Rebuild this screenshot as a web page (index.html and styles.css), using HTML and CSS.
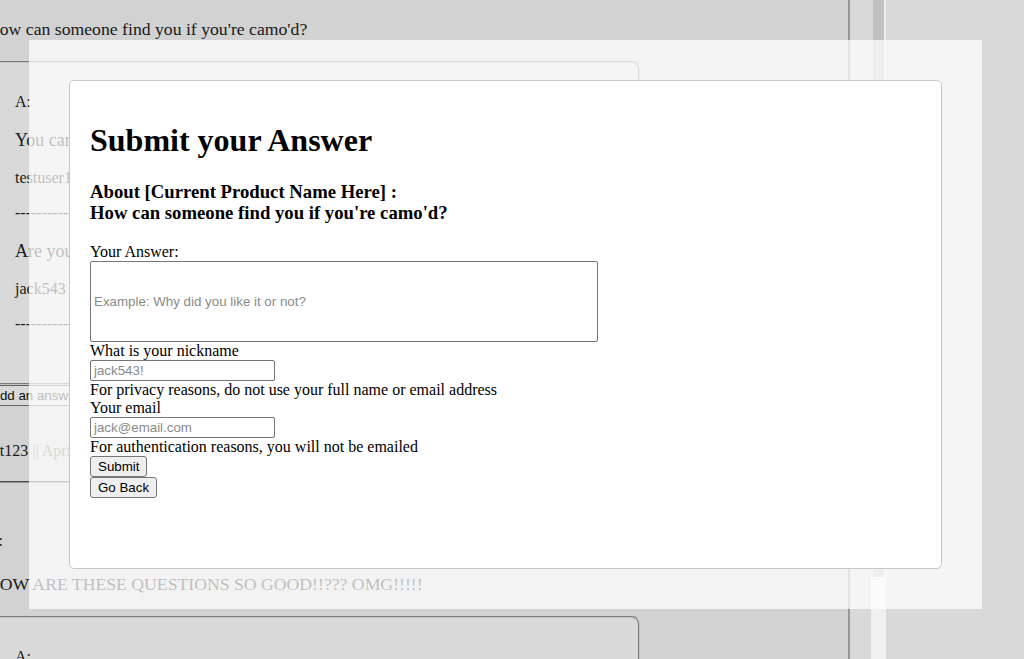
FILE: index.html
```html
<!DOCTYPE html>
<html lang="en">
<head>
<meta charset="utf-8">
<title>Questions</title>
<link rel="stylesheet" href="styles.css">
</head>
<body>
<div class="page">
  <main class="main">
    <section class="question">
      <p class="q-label">Q:</p>
      <p class="q-text">How can someone find you if you're camo'd?</p>
      <div class="answers">
        <p class="a-label">A:</p>
        <p class="a-text">You can't, that's the whole point of camo!</p>
        <p class="a-meta">testuser1 <span class="muted">|| April 3, 2020</span></p>
        <p class="sep">------------------------------------------</p>
        <p class="a-text">Are you serious? Just look a little closer.</p>
        <p class="a-meta">jack543 <span class="muted">|| April 4, 2020</span></p>
        <p class="sep">------------------------------------------</p>
      </div>
      <button class="add-btn" type="button">Add an answer</button>
      <p class="meta">test123 <span class="muted">|| April 2, 2020</span></p>
      <hr class="divider">
    </section>
    <section class="question">
      <p class="q-label">Q:</p>
      <p class="q-text">HOW ARE THESE QUESTIONS SO GOOD!!??? OMG!!!!!</p>
      <div class="answers">
        <p class="a-label">A:</p>
        <p class="a-text">Because the community is great!</p>
      </div>
    </section>
  </main>
  <div class="scrollbar">
    <div class="thumb"></div>
    <div class="track"></div>
  </div>
</div>

<div class="backdrop"></div>

<div class="modal">
  <div class="dialog">
    <h1 class="title">Submit your Answer</h1>
    <h3 class="subtitle">About [Current Product Name Here] :<br>How can someone find you if you're camo'd?</h3>
    <form class="form">
      <label class="label" for="answer">Your Answer:</label>
      <input class="field field-big" id="answer" type="text" placeholder="Example: Why did you like it or not?">
      <label class="label" for="nick">What is your nickname</label>
      <input class="field" id="nick" type="text" placeholder="jack543!">
      <span class="hint">For privacy reasons, do not use your full name or email address</span>
      <label class="label" for="email">Your email</label>
      <input class="field" id="email" type="text" placeholder="jack@email.com">
      <span class="hint">For authentication reasons, you will not be emailed</span>
      <button class="btn" type="submit">Submit</button>
      <button class="btn" type="button">Go Back</button>
    </form>
  </div>
</div>
</body>
</html>
```

FILE: styles.css
```css
html, body {
  margin: 0;
  padding: 0;
}

body {
  background: #ffffff;
  height: 100vh;
  overflow: hidden;
  font-family: "Liberation Serif", "Times New Roman", serif;
  color: #222222;
}

.page {
  display: flex;
  align-items: flex-start;
  gap: 21px;
  height: 100vh;
}

/* ---------- background page ---------- */
.main {
  flex: 0 0 auto;
  width: 861px;
  min-height: calc(100vh + 72px);
  margin-left: -13px;
  margin-top: -72px;
  background: #f7f7f7;
  border-right: 2px solid #b2b2b2;
}

.question {
  padding-top: 49px;
}

.q-label {
  margin: 0;
  font-size: 16px;
  line-height: 18px;
}

.q-text {
  margin: 24px 0 0;
  font-size: 17.7px;
  line-height: 21px;
}

.answers {
  width: 597px;
  margin-top: 21px;
  padding: 14px 26px 33px;
  background: #ffffff;
  border: 2px groove #e6e6e6;
  border-radius: 8px;
}

.a-label {
  margin: 16px 0;
  font-size: 16px;
  line-height: 18px;
}

.a-meta,
.sep {
  margin: 17px 0;
  font-size: 16px;
  line-height: 18px;
}

.a-text {
  margin: 18px 0;
  font-size: 18px;
  line-height: 22px;
}

.muted {
  color: #8a8a8a;
}

.add-btn {
  display: block;
  width: 300px;
  height: 21px;
  margin: 0;
  padding: 1px 3px;
  text-align: left;
  font-family: "Liberation Sans", Arial, sans-serif;
  font-size: 13.33px;
  color: #111111;
  background: #ffffff;
  border: 1px solid #767676;
  border-radius: 2px;
}

.meta {
  margin: 36px 0 0 -5px;
  font-size: 16px;
  line-height: 18px;
}

.divider {
  margin: 21px 0 0;
  border: 1px inset #b0b0b0;
  border-width: 1px 0;
  height: 0;
}

/* fake native scrollbar of the page */
.scrollbar {
  position: relative;
  z-index: 11;
  flex: 0 0 15px;
  width: 15px;
  height: 100vh;
  display: flex;
  flex-direction: column;
  background: #f1f1f1;
}

.thumb {
  height: 577px;
  background: #c1c1c1;
  border-left: 2px solid #dadada;
  border-right: 2px solid #eeeeee;
}

.track {
  flex: 1;
  background: #f1f1f1;
}

/* ---------- modal ---------- */
.backdrop {
  position: fixed;
  inset: 0;
  z-index: 10;
  background: rgba(0, 0, 0, 0.15);
}

.modal {
  position: fixed;
  left: 29px;
  top: 40px;
  z-index: 12;
  width: 953px;
  height: 569px;
  box-sizing: border-box;
  padding: 40px;
  background: rgba(255, 255, 255, 0.72);
}

.dialog {
  box-sizing: border-box;
  height: 100%;
  padding: 20px;
  background: #ffffff;
  border: 1px solid #c8c8c8;
  border-radius: 5px;
  color: #000000;
}

.title {
  margin: 21.44px 0;
  font-size: 32px;
  line-height: 37px;
  font-weight: bold;
}

.subtitle {
  margin: 18.72px 0;
  font-size: 18.72px;
  line-height: 21.5px;
  font-weight: bold;
}

.form {
  display: flex;
  flex-direction: column;
  align-items: flex-start;
}

.label,
.hint {
  font-size: 16px;
  line-height: 18px;
}

.field {
  box-sizing: border-box;
  width: 185px;
  height: 21px;
  margin: 0;
  padding: 1px 3px;
  font-family: "Liberation Sans", Arial, sans-serif;
  font-size: 13.33px;
  border: 1px solid #767676;
  border-radius: 2px;
  background: #ffffff;
}

.field::placeholder {
  color: #8a8a8a;
}

.field-big {
  width: 508px;
  height: 81px;
}

.btn {
  box-sizing: border-box;
  height: 21px;
  margin: 0;
  padding: 1px 7px;
  font-family: "Liberation Sans", Arial, sans-serif;
  font-size: 13.33px;
  color: #000000;
  background: #efefef;
  border: 1px solid #767676;
  border-radius: 3px;
}
```
